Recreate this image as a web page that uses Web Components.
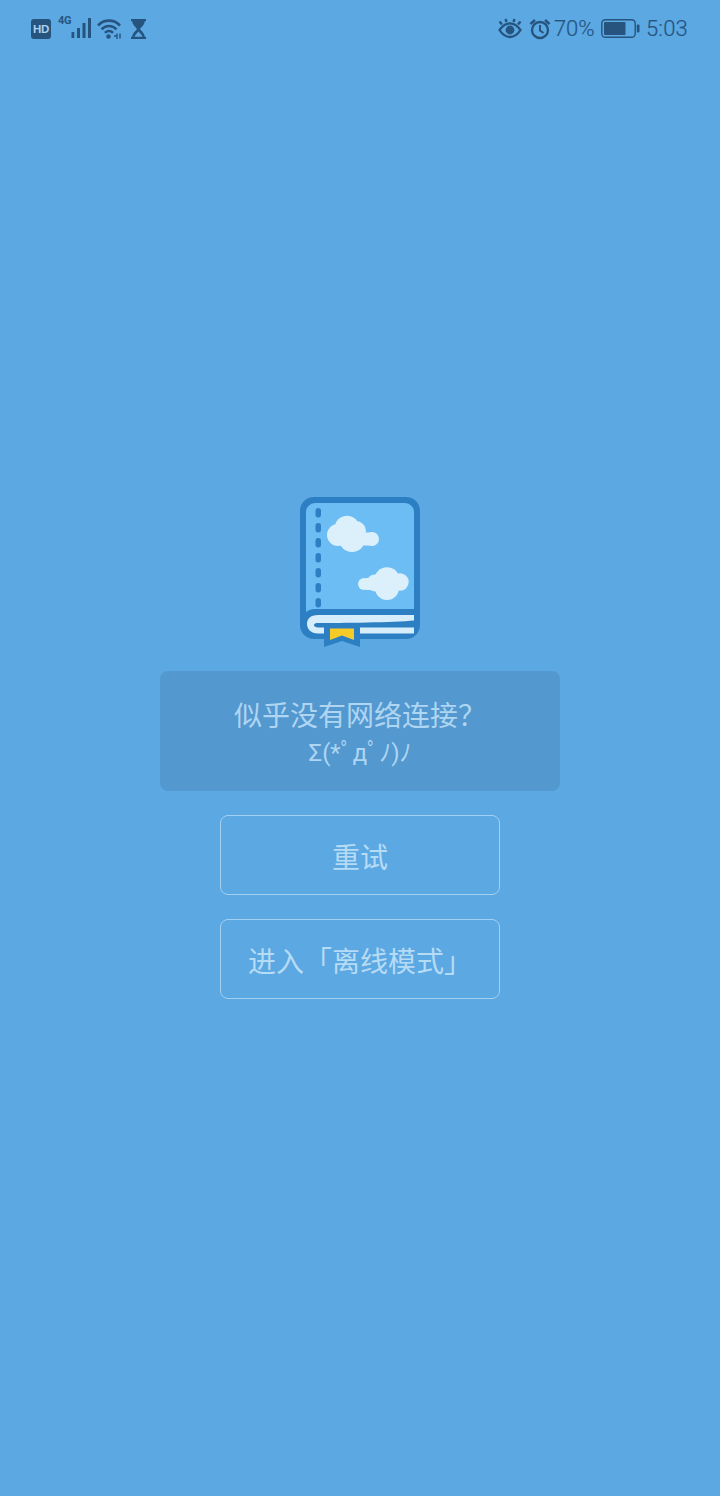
<!DOCTYPE html>
<html lang="zh"><head><meta charset="utf-8"><title>离线</title>
<style>
html,body{margin:0;padding:0;height:1496px;background:#5ca8e2;font-family:Roboto,"Noto Sans CJK SC",sans-serif}
body{display:flex;flex-direction:column}
</style></head><body>
<status-bar></status-bar>
<offline-screen>
  <book-logo></book-logo>
  <message-box>似乎没有网络连接&#xFF1F;<span slot="sub">Σ(*ﾟдﾟﾉ)ﾉ</span></message-box>
  <outline-button>重试</outline-button>
  <outline-button last>进入「离线模式」</outline-button>
</offline-screen>
<script>
function def(name,html){customElements.define(name,class extends HTMLElement{constructor(){super();this.attachShadow({mode:'open'}).innerHTML=html;}});}
const ink='#26547f';
def('status-bar',`<style>
:host{display:flex;align-items:center;height:56px;flex:none;box-sizing:border-box;padding:1px 32px 0 31px;color:${ink};font-family:Roboto,sans-serif}
svg{display:block;flex:none}
.l,.r{display:flex;align-items:center}
.r{margin-left:auto}
.hd{width:20px;height:20px;border-radius:3px;background:${ink};color:#a9d0ee;font:700 11.500px/20px "Liberation Sans",sans-serif;text-align:center;letter-spacing:-.3px}
.sig{position:relative;width:33px;height:21px;margin-left:7px}
.sig b{position:absolute;left:0;top:-3px;font:700 11px/12px Roboto,sans-serif;letter-spacing:-.2px}
.sig svg{position:absolute;left:13px;top:0}
.t{font-size:22px;line-height:26px;font-weight:300;-webkit-text-stroke:.2px ${ink}}
</style>
<div class="l">
<div class="hd">HD</div>
<div class="sig"><b>4G</b><svg width="20" height="21" viewBox="0 0 20 21" fill="${ink}"><rect x=".5" y="14" width="2.800" height="6" rx=".5"/><rect x="6" y="10" width="3" height="10"/><rect x="11.500" y="5" width="3" height="15"/><rect x="17" y="0" width="3" height="20"/></svg></div>
<svg style="margin-left:6px" width="25" height="21" viewBox="0 0 25 21" fill="none" stroke="${ink}" stroke-width="2.600"><path d="M1 7.500C7 1 17 1 23 7.500"/><path d="M4.500 11.300C8.500 6.800 15.500 6.800 19.500 11.300"/><path d="M8 14.800C10.300 12.300 13.700 12.300 16 14.800"/><circle cx="11.500" cy="18.500" r="2.200" fill="${ink}" stroke="none"/><path d="M17 18h3.500M20 15.500v5.500M23 15.500v5" stroke-width="1.400"/></svg>
<svg style="margin-left:8px" width="17" height="22" viewBox="0 0 17 22" fill="${ink}"><path d="M1 1h15v2.200h-1.300c0 3.300-3 5.500-4.800 7.800 1.800 2.300 4.800 4.500 4.800 7.800H16V21H1v-2.200h1.300c0-3.300 3-5.500 4.800-7.800C5.300 8.700 2.300 6.500 2.300 3.200H1zM4.600 18.800h7.800c-.6-1.800-2.600-3.700-3.900-5.200-1.300 1.500-3.300 3.400-3.900 5.200z"/></svg>
</div>
<div class="r">
<svg width="24" height="21" viewBox="0 0 24 21" fill="none" stroke="${ink}"><path d="M1.500 12C5 7 8.500 5.300 12 5.300S19 7 22.500 12C19 17.500 15.500 19 12 19S5 17.500 1.500 12z" stroke-width="2.300"/><circle cx="12" cy="12" r="4.400" fill="${ink}" stroke="none"/><path d="M4 6.500L1.500 3.500M8.500 4L7.500 1M15.500 4L16.500 1M20 6.500L22.500 3.500" stroke-width="2.400"/></svg>
<svg style="margin-left:7px" width="22" height="22" viewBox="0 0 22 22" fill="none" stroke="${ink}" stroke-width="2.300"><circle cx="11" cy="12" r="8"/><path d="M11 7v5.500l3.500 2.500" stroke-width="2"/><path d="M1.500 6L6 2M20.500 6L16 2" stroke-width="2.500"/></svg>
<span class="t" style="margin-left:3px;width:41px;letter-spacing:-.1px">70%</span>
<svg style="margin-left:6px" width="39" height="19" viewBox="0 0 39 19"><rect x=".8" y=".8" width="33.400" height="17.400" rx="3.500" fill="none" stroke="${ink}" stroke-width="1.400"/><rect x="3" y="3" width="21.500" height="13" rx="1" fill="${ink}"/><rect x="35.800" y="5.500" width="2.700" height="8" rx="1" fill="${ink}"/></svg>
<span class="t" style="margin-left:6px;letter-spacing:.2px">5:03</span>
</div>`);
def('offline-screen',`<style>
:host{display:flex;flex:1;flex-direction:column;align-items:center;justify-content:center;padding-bottom:56px}
</style><slot></slot>`);
def('book-logo',`<style>:host{display:block;width:120px;height:150px;margin-bottom:24px}svg{display:block}</style>
<svg width="120" height="150" viewBox="0 0 120 150">
<rect x="0" y="0" width="120" height="142" rx="14" fill="#2c7fc2"/>
<path d="M15 6H105A9 9 0 0 1 114 15V112H15C11.500 112 8.500 113 6 115V15A9 9 0 0 1 15 6z" fill="#6cbdf4"/>
<path d="M114 118H18C10 118 7 122 7 127C7 132 11 136.500 18 136.500H114V130.500H18C15.500 130.500 14 129.500 14 128C14 126.500 16 126 18 126C40 126 95 125.500 114 123.500z" fill="#d6edfb"/>
<path d="M24 128H60V150L42 144L24 150z" fill="#2c7fc2"/>
<path d="M30 131.500H54V143L42 138.500L30 143z" fill="#f7cb27"/>
<g fill="#2c7fc2"><rect x="15.500" y="11" width="5.500" height="9.500" rx="2.700"/><rect x="15.500" y="26" width="5.500" height="9.500" rx="2.700"/><rect x="15.500" y="41" width="5.500" height="9.500" rx="2.700"/><rect x="15.500" y="56" width="5.500" height="9.500" rx="2.700"/><rect x="15.500" y="71" width="5.500" height="9.500" rx="2.700"/><rect x="15.500" y="86" width="5.500" height="9.500" rx="2.700"/><rect x="15.500" y="101" width="5.500" height="9.500" rx="2.700"/></g>
<g fill="#dcf0fb"><circle cx="38" cy="38" r="11"/><circle cx="47" cy="31" r="12.300"/><circle cx="56" cy="34" r="10"/><circle cx="52" cy="42" r="13"/><circle cx="72" cy="42" r="7"/><rect x="55" y="35.500" width="18" height="13"/>
<circle cx="64" cy="87" r="6"/><circle cx="75" cy="86" r="8.500"/><circle cx="87" cy="83" r="12.700"/><circle cx="87" cy="91" r="12"/><circle cx="100" cy="85" r="8.700"/><rect x="66" y="81" width="22" height="12"/></g>
</svg>`);
def('message-box',`<style>
:host{display:flex;flex-direction:column;align-items:center;justify-content:center;box-sizing:border-box;width:400px;height:120px;border-radius:8px;background:#5398cf;color:#aed5f2;font-size:28px;line-height:38px;padding-top:5px;margin-bottom:24px;font-family:Roboto,"Noto Sans CJK SC",sans-serif}
::slotted(span){font-size:24px;line-height:34px}
</style><div><slot></slot></div><slot name="sub"></slot>`);
def('outline-button',`<style>
:host{display:flex;align-items:center;justify-content:center;box-sizing:border-box;width:280px;height:80px;border:1px solid #a3cff0;border-radius:8px;color:#b6dbf5;font-size:28px;padding-top:1px;margin-bottom:24px;font-family:Roboto,"Noto Sans CJK SC",sans-serif}
:host([last]){margin-bottom:0}
</style><slot></slot>`);
</script>
</body></html>
